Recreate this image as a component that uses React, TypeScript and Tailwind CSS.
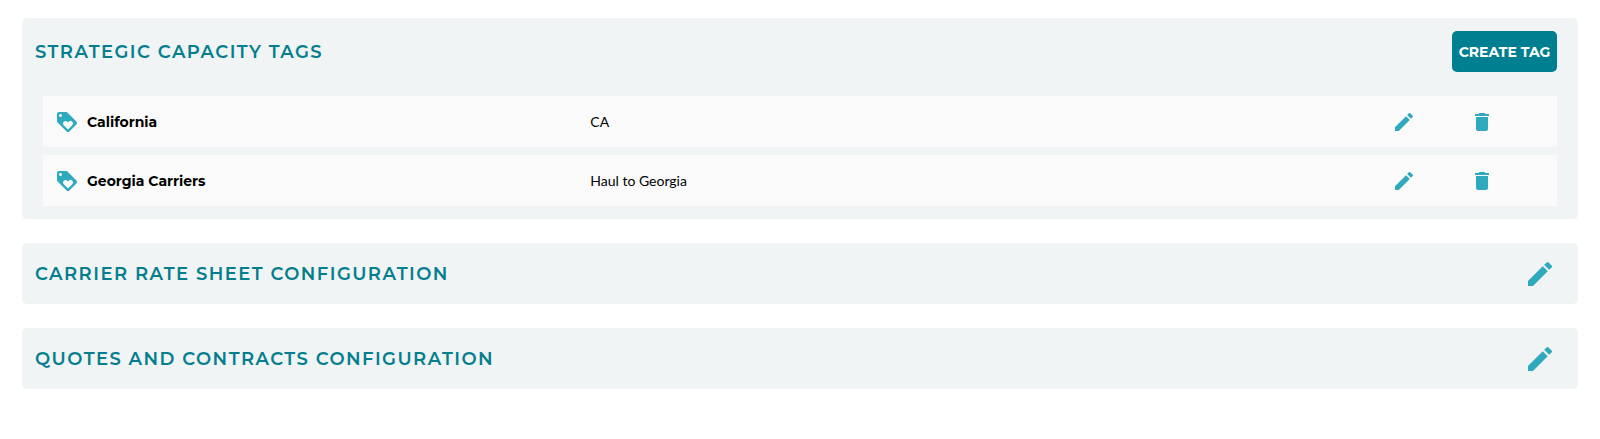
import React from "react";
import { MdDelete, MdEdit, MdLoyalty } from "react-icons/md";

const tags = [
  { name: "California", description: "CA" },
  { name: "Georgia Carriers", description: "Haul to Georgia" },
];

const SectionTitle = ({ children }: { children: React.ReactNode }) => (
  <h2 className="text-lg font-semibold tracking-[0.08em] text-[#047e8f] uppercase">
    {children}
  </h2>
);

const ConfigSection = ({ title }: { title: string }) => (
  <section className="flex items-center justify-between h-[61px] pl-[13px] pr-[22px] rounded-[5px] bg-[#f0f4f5]">
    <SectionTitle>{title}</SectionTitle>
    <button type="button" aria-label={`Edit ${title}`}>
      <MdEdit className="size-8" />
    </button>
  </section>
);

const App = () => {
  return (
    <main className="flex flex-col gap-6 px-[22px] pt-[18px] pb-12 bg-white font-['Montserrat','Inter',sans-serif] text-[#2ea9bd]">
      <section className="py-[13px] pr-[21px] rounded-[5px] bg-[#f0f4f5]">
        <div className="flex items-center justify-between pl-[13px]">
          <SectionTitle>Strategic Capacity Tags</SectionTitle>
          <button
            type="button"
            className="w-[105px] h-[41px] rounded-[5px] bg-[#007f91] text-sm font-bold whitespace-nowrap text-white"
          >
            CREATE TAG
          </button>
        </div>
        <ul className="flex flex-col gap-2 mt-6 pl-[21px]">
          {tags.map((tag) => (
            <li
              key={tag.name}
              className="flex items-center h-[51px] pl-3 pr-[63px] bg-[#fafafa]"
            >
              <div className="flex items-center gap-2 w-[37.2%]">
                <MdLoyalty className="size-6" />
                <h3 className="text-sm font-bold text-black">{tag.name}</h3>
              </div>
              <p className="flex-1 font-['Lato',sans-serif] text-sm text-black">
                {tag.description}
              </p>
              <div className="flex items-center gap-[54px]">
                <button type="button" aria-label={`Edit ${tag.name}`}>
                  <MdEdit className="size-6" />
                </button>
                <button type="button" aria-label={`Delete ${tag.name}`}>
                  <MdDelete className="size-6" />
                </button>
              </div>
            </li>
          ))}
        </ul>
      </section>
      <ConfigSection title="Carrier Rate Sheet Configuration" />
      <ConfigSection title="Quotes and Contracts Configuration" />
    </main>
  );
};

export default App;
